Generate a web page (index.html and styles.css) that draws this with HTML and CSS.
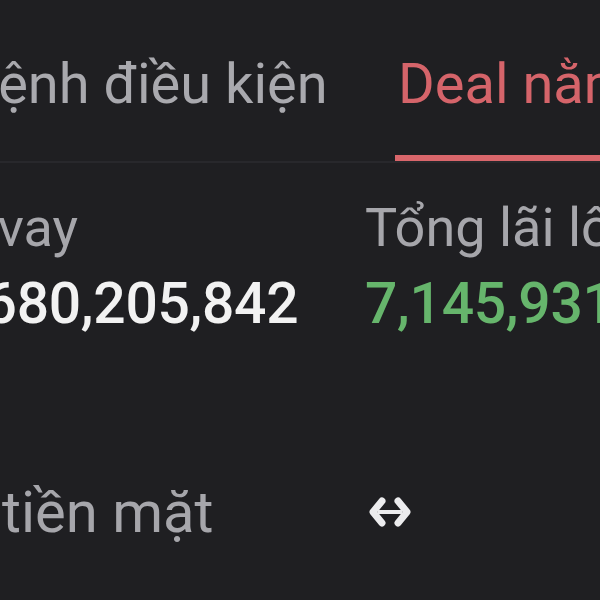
FILE: index.html
```html
<!DOCTYPE html>
<html lang="vi">
<head>
<meta charset="utf-8">
<link rel="stylesheet" href="styles.css">
</head>
<body>
<div class="screen">
  <div class="tabs">
    <div class="tab tab-first">Lệnh điều kiện</div>
    <div class="tab tab-active">Deal nằm giữ</div>
  </div>
  <div class="stats">
    <div class="stat stat-first">
      <div class="label label-cut">Nợ vay</div>
      <div class="value value-cut">1,680,205,842</div>
    </div>
    <div class="stat">
      <div class="label">Tổng lãi lố dự kiến</div>
      <div class="value value-up">7,145,931</div>
    </div>
  </div>
  <div class="row">
    <div class="row-label">Số tiền mặt</div>
    <div class="row-icon">
      <svg width="44" height="32" viewBox="0 0 44 32">
        <polyline points="14,5 5,16 14,27" fill="none" stroke="#ececee" stroke-width="7" stroke-linejoin="round" stroke-linecap="round"/>
        <polyline points="30,5 39,16 30,27" fill="none" stroke="#ececee" stroke-width="7" stroke-linejoin="round" stroke-linecap="round"/>
        <line x1="10" y1="16" x2="34" y2="16" stroke="#ececee" stroke-width="4"/>
      </svg>
    </div>
  </div>
</div>
</body>
</html>
```

FILE: styles.css
```css
* { box-sizing: border-box; }
html, body { margin: 0; padding: 0; background: #1f1f22; }
.screen {
  width: 600px;
  height: 600px;
  overflow: hidden;
  background: #1f1f22;
  font-family: Roboto, "Noto Sans", sans-serif;
}
.tabs {
  display: flex;
  height: 163px;
  border-bottom: 2px solid #28282c;
  white-space: nowrap;
}
.tab {
  font-size: 56px;
  line-height: 60px;
  padding-top: 54px;
  color: #a9a9ae;
  height: 161px;
}
.tab-first {
  flex: 0 0 427px;
  margin-left: -32px;
}
.tab-active {
  flex: 0 0 auto;
  color: #d5646a;
  border-bottom: 6px solid #d9666b;
  padding-left: 3px;
}
.stats {
  display: flex;
  white-space: nowrap;
  padding-top: 35px;
}
.stat {
  display: flex;
  flex-direction: column;
  flex: 0 0 auto;
}
.stat-first { flex: 0 0 365px; }
.label {
  font-size: 54px;
  line-height: 60px;
  color: #a6a6ab;
}
.value {
  font-size: 57px;
  line-height: 92px;
  font-weight: 500;
  letter-spacing: -0.3px;
  color: #f2f2f2;
}
.value-up { color: #66b56c; }
.label-cut { margin-left: -85px; }
.value-cut { margin-left: -60px; }
.row {
  display: flex;
  align-items: center;
  padding-top: 127px;
  white-space: nowrap;
}
.row-label {
  flex: 0 0 448px;
  margin-left: -80px;
  font-size: 58px;
  line-height: 70px;
  color: #a6a6ab;
}
.row-icon { display: flex; }
```
